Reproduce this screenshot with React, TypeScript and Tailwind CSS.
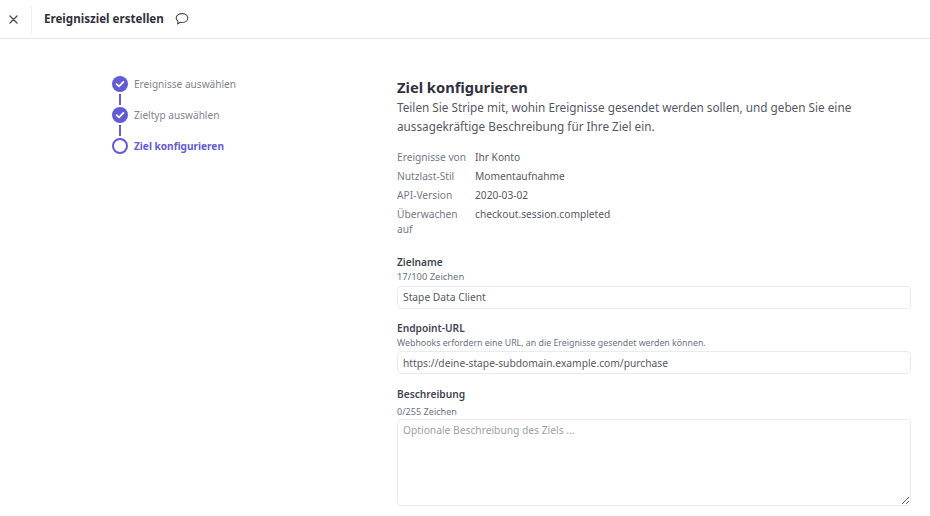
import React from "react";

function Done({ label }: { label: string }) {
  return (
    <div className="flex items-center h-4 gap-[6px]">
      <svg width="16" height="16" viewBox="0 0 16 16" className="shrink-0">
        <circle cx="8" cy="8" r="8" fill="#635bd6" />
        <path d="M4.6 8.2 7 10.4 11.4 5.9" fill="none" stroke="#fff" strokeWidth="1.8" strokeLinecap="round" strokeLinejoin="round" />
      </svg>
      <span className="pt-[2px] text-[10.1px] text-[#80848f]">{label}</span>
    </div>
  );
}

function Line() {
  return <div className="w-[2px] h-[11px] my-[2px] ml-[7px] bg-[#635bd6]" />;
}

function Row({ k, v }: { k: string; v: string }) {
  return (
    <div className="flex text-[10.2px] leading-[15px]">
      <div className="w-[78px] shrink-0 text-[#747a87]">{k}</div>
      <div className="text-[#555966]">{v}</div>
    </div>
  );
}

export default function App() {
  return (
    <div className="w-[930px] h-[516px] overflow-hidden bg-white font-['Noto_Sans','Open_Sans',sans-serif]">
      <header className="h-[39px] border-b border-[#e6e8ec] flex items-center">
        <div className="w-[32px] h-[27px] flex items-center justify-center border-r border-[#f0f1f4]">
          <svg width="9" height="9" viewBox="0 0 9 9" className="ml-[-5px]">
            <path d="M1 1l7 7M8 1L1 8" stroke="#474e5c" strokeWidth="1.4" strokeLinecap="round" />
          </svg>
        </div>
        <h1 className="ml-[12px] text-[11.6px] font-bold text-[#30313d]">Ereignisziel erstellen</h1>
        <svg width="14" height="14" viewBox="0 0 14 14" className="ml-[11px]">
          <path d="M7 1.600C3.700 1.600 1.200 3.500 1.200 6c0 1.300.7 2.500 1.900 3.300l-.6 2.600 2.900-1.600c.5.1 1 .2 1.600.2 3.300 0 5.800-1.900 5.800-4.500S10.300 1.600 7 1.600z" fill="none" stroke="#474e5c" strokeWidth="1.1" strokeLinejoin="round" />
        </svg>
      </header>

      <main className="flex">
        <nav className="w-[397px] shrink-0 pl-[112px] pt-[37px]">
          <Done label="Ereignisse auswählen" />
          <Line />
          <Done label="Zieltyp auswählen" />
          <Line />
          <div className="flex items-center h-4 gap-[6px]">
            <div className="w-4 h-4 rounded-full border-2 border-[#635bd6] shrink-0" />
            <span className="pt-[2px] text-[10.1px] font-bold text-[#635bd6]">Ziel konfigurieren</span>
          </div>
        </nav>

        <section className="w-[514px] pt-[38px]">
          <h2 className="text-[14.7px] leading-[20px] font-bold text-[#30313d]">Ziel konfigurieren</h2>
          <p className="mt-[1px] text-[11.75px] leading-[19px] text-[#555966]">
            Teilen Sie Stripe mit, wohin Ereignisse gesendet werden sollen, und geben Sie eine aussagekräftige Beschreibung für Ihre Ziel ein.
          </p>

          <div className="mt-[14px] flex flex-col gap-[4px]">
            <Row k="Ereignisse von" v="Ihr Konto" />
            <Row k="Nutzlast-Stil" v="Momentaufnahme" />
            <Row k="API-Version" v="2020-03-02" />
            <div className="flex text-[10.2px] leading-[15px]">
              <div className="w-[78px] shrink-0 pr-[10px] text-[#747a87]">Überwachen auf</div>
              <div className="text-[#555966]">checkout.session.completed</div>
            </div>
          </div>

          <div className="mt-[18px]">
            <div className="text-[10.2px] leading-[15px] font-semibold text-[#414552]">Zielname</div>
            <div className="mt-[1px] text-[9.4px] leading-[12px] text-[#6a7383]">17/100 Zeichen</div>
            <input readOnly value="Stape Data Client" className="mt-[2px] w-full h-[23px] px-[5px] text-[10.25px] text-[#555966] border border-[#e9ebee] rounded-[4px] outline-none" />
          </div>

          <div className="mt-[12px]">
            <div className="text-[10.2px] leading-[15px] font-semibold text-[#414552]">Endpoint-URL</div>
            <div className="mt-[1px] text-[8.8px] leading-[12px] text-[#6a7383]">Webhooks erfordern eine URL, an die Ereignisse gesendet werden können.</div>
            <input readOnly value="https://deine-stape-subdomain.example.com/purchase" className="mt-[2px] w-full h-[23px] px-[5px] text-[10.25px] text-[#555966] border border-[#e9ebee] rounded-[4px] outline-none" />
          </div>

          <div className="mt-[13px]">
            <div className="text-[10.2px] leading-[15px] font-semibold text-[#414552]">Beschreibung</div>
            <div className="mt-[4px] text-[9.1px] leading-[12px] text-[#6a7383]">0/255 Zeichen</div>
            <textarea placeholder="Optionale Beschreibung des Ziels ..." className="block mt-[1px] w-full h-[87px] px-[5px] py-[3px] text-[10.25px] leading-[15px] placeholder:text-[#9a9fa9] border border-[#e9ebee] rounded-[4px] outline-none" />
          </div>
        </section>
      </main>
    </div>
  );
}
